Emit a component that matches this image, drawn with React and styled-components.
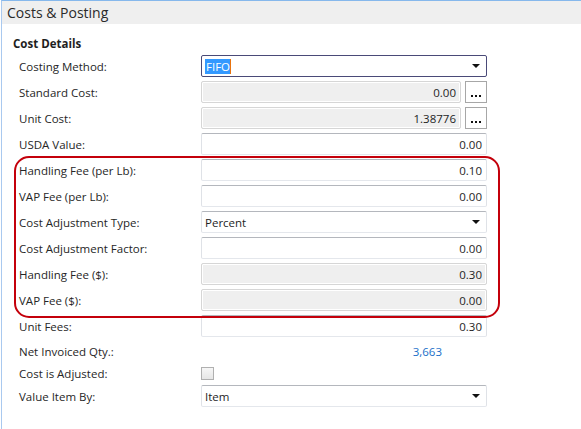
import React from 'react'
import styled, { createGlobalStyle, css } from 'styled-components'

const GlobalStyle = createGlobalStyle`
    html, body {
        margin: 0;
        padding: 0;
        background: #fff;
    }
    body {
        font-family: 'Segoe UI', 'Open Sans', 'Noto Sans', sans-serif;
        color: #1e1e1e;
    }
`

const Frame = styled.div`
    position: relative;
    width: 580px;
    height: 428px;
    margin-left: 1px;
    border-top: 1px solid #86b8ec;
    border-left: 1px solid #a9c9ef;
    overflow: hidden;
`

const Header = styled.div`
    height: 23px;
    background: #efefef;
    display: flex;
    align-items: center;
    padding-left: 5px;
    font-size: 14px;
    color: #2a2a2a;
`

const Section = styled.div`
    padding: 12px 0 0 11px;
`

const SectionTitle = styled.div`
    font-size: 11.5px;
    font-weight: 700;
    line-height: 16px;
    margin-bottom: 3px;
`

const Fields = styled.div`
    padding-left: 6px;
`

const Row = styled.div`
    display: grid;
    grid-template-columns: 182px 286px;
    align-items: center;
    height: ${({h}) => h || 22}px;
    margin-bottom: 4px;
`

const Label = styled.div`
    font-size: 11.5px;
    color: #262626;
    white-space: nowrap;
`

const Control = styled.div`
    display: flex;
    align-items: center;
    gap: 4px;
    height: 100%;
`

const Box = styled.div`
    flex: 1;
    box-sizing: border-box;
    height: 22px;
    display: flex;
    align-items: center;
    justify-content: ${({right}) => right ? 'flex-end' : 'flex-start'};
    padding: 0 4px 0 3px;
    font-size: 11.5px;
    color: #1e1e1e;
    background: #fff;
    border: 1px solid;
    border-color: #b4b7bd #dfe2e7 #e4e7ec #dfe2e7;
    border-radius: 2px;

    ${({readOnly}) => readOnly && css`
        background: #efefef;
        border-color: #d6d6d6;
        box-shadow: inset 0 0 0 1px #fff;
    `}

    ${({focused}) => focused && css`
        border-color: #4a4a78;
    `}
`

const Selected = styled.span`
    background: #3399ff;
    color: #fff;
    padding: 0 0 0 1px;
    border-right: 1px solid #e8730e;
    line-height: 15px;
`

const Arrow = styled.span`
    margin-left: auto;
    width: 0;
    height: 0;
    border-left: 4px solid transparent;
    border-right: 4px solid transparent;
    border-top: 4px solid #111;
    margin-right: 2px;
`

const DotsButton = styled.button`
    width: 22px;
    height: 22px;
    box-sizing: border-box;
    padding: 0 0 5px;
    border: 1px solid #a7a7a7;
    background: #fff;
    display: flex;
    align-items: flex-end;
    justify-content: center;
    gap: 2px;
`

const Dot = styled.span`
    width: 2px;
    height: 2px;
    background: #111;
`

const LinkValue = styled.div`
    font-size: 11.5px;
    color: #1a6fc9;
    text-align: right;
    padding-right: 45px;
`

const Check = styled.span`
    width: 13px;
    height: 13px;
    box-sizing: border-box;
    border: 1px solid #b0b0b0;
    background: linear-gradient(#f6f6f6, #e6e6e6);
`

const Highlight = styled.div`
    position: absolute;
    left: 12px;
    top: 155px;
    width: 486px;
    height: 162px;
    box-sizing: border-box;
    border: 2px solid #c4000b;
    border-radius: 15px;
    pointer-events: none;
`

const fields = [
    { label: 'Standard Cost:', value: '0.00', readOnly: true, lookup: true },
    { label: 'Unit Cost:', value: '1.38776', readOnly: true, lookup: true },
    { label: 'USDA Value:', value: '0.00' },
    { label: 'Handling Fee (per Lb):', value: '0.10' },
    { label: 'VAP Fee (per Lb):', value: '0.00' },
    { label: 'Cost Adjustment Type:', value: 'Percent', select: true },
    { label: 'Cost Adjustment Factor:', value: '0.00' },
    { label: 'Handling Fee ($):', value: '0.30', readOnly: true },
    { label: 'VAP Fee ($):', value: '0.00', readOnly: true },
    { label: 'Unit Fees:', value: '0.30' },
]

const App = () => {
    return(
        <Frame>
            <GlobalStyle />
            <Header>Costs &amp; Posting</Header>
            <Section>
                <SectionTitle>Cost Details</SectionTitle>
                <Fields>
                    <Row>
                        <Label>Costing Method:</Label>
                        <Control>
                            <Box focused>
                                <Selected>FIFO</Selected>
                                <Arrow />
                            </Box>
                        </Control>
                    </Row>
                    {fields.map(f => (
                        <Row key={f.label}>
                            <Label>{f.label}</Label>
                            <Control>
                                <Box readOnly={f.readOnly} right={!f.select}>
                                    {f.value}
                                    {f.select && <Arrow />}
                                </Box>
                                {f.lookup && (
                                    <DotsButton>
                                        <Dot /><Dot /><Dot />
                                    </DotsButton>
                                )}
                            </Control>
                        </Row>
                    ))}
                    <Row h={20}>
                        <Label>Net Invoiced Qty.:</Label>
                        <LinkValue>3,663</LinkValue>
                    </Row>
                    <Row h={16}>
                        <Label>Cost is Adjusted:</Label>
                        <Control>
                            <Check />
                        </Control>
                    </Row>
                    <Row>
                        <Label>Value Item By:</Label>
                        <Control>
                            <Box>
                                Item
                                <Arrow />
                            </Box>
                        </Control>
                    </Row>
                </Fields>
            </Section>
            <Highlight />
        </Frame>
    );
}

export default App
